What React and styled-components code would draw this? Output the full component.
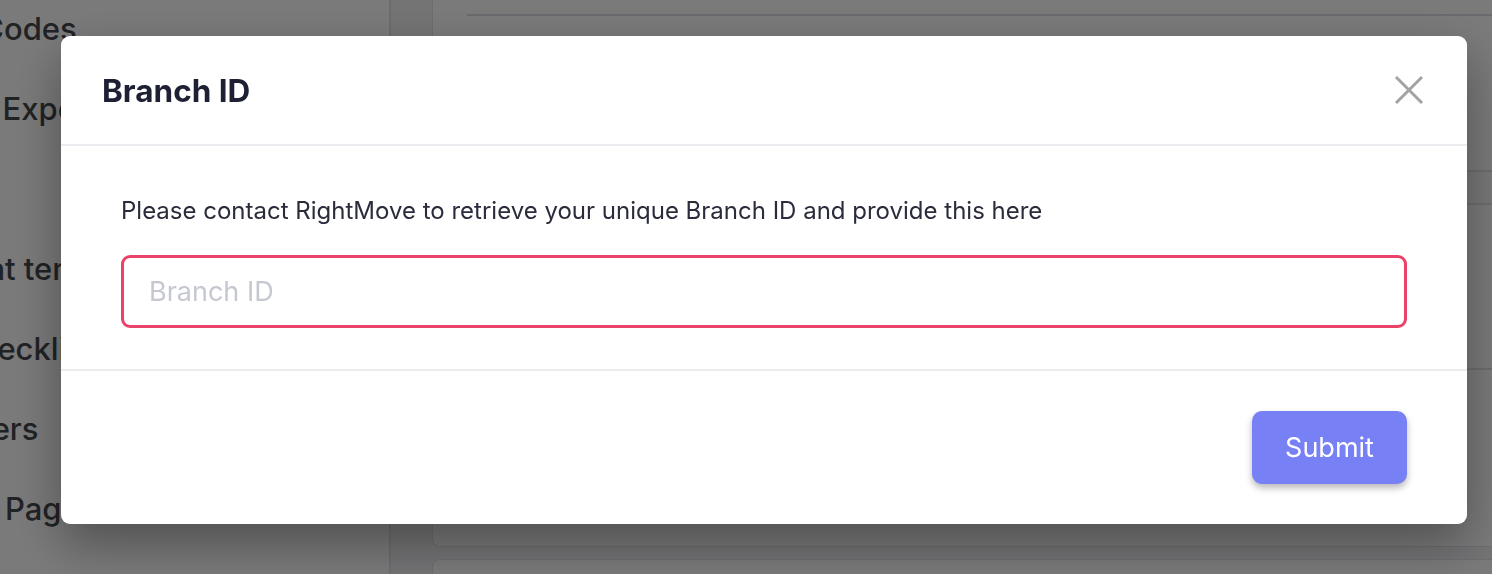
import React from "react";
import styled, { createGlobalStyle } from "styled-components";

const GlobalStyle = createGlobalStyle`
  html, body {
    margin: 0;
    padding: 0;
    height: 100%;
    overflow: hidden;
  }
  body {
    font-family: Inter, "Noto Sans", "Liberation Sans", sans-serif;
    background: #ffffff;
  }
  * { box-sizing: border-box; }
`;

const navItems = [
  { label: "QR Codes", indent: -71 },
  { label: "Data Export", indent: -74 },
  { label: "", indent: 0 },
  { label: "Document templates", indent: -137 },
  { label: "Checklists", indent: -44 },
  { label: "Users", indent: -48 },
  { label: "Landing Pages", indent: -122 },
];

function App() {
  return (
    <>
      <GlobalStyle />
      <StPage>
        <StSidebar>
          {navItems.map((item, i) => (
            <StNavItem key={i} $indent={item.indent}>
              {item.label}
            </StNavItem>
          ))}
        </StSidebar>
        <StMain>
          <StCard>
            <StCardRule />
            <StCardBlock $height={154} />
            <StTableHead />
            <StCardBlock $height={165} $border />
            <StCardBlock $height={176} />
          </StCard>
          <StCard $rounded />
        </StMain>
      </StPage>

      <StOverlay>
        <StModal>
          <StHeader>
            <StTitle>Branch ID</StTitle>
            <StClose type="button" aria-label="Close">
              <svg width="30" height="30" viewBox="0 0 30 30">
                <path
                  d="M2 2 L28 28 M28 2 L2 28"
                  stroke="#a3a3a3"
                  strokeWidth="3"
                  fill="none"
                />
              </svg>
            </StClose>
          </StHeader>

          <StBody>
            <StHint>
              Please contact RightMove to retrieve your unique Branch ID and
              provide this here
            </StHint>
            <StInput type="text" placeholder="Branch ID" />
          </StBody>

          <StFooter>
            <StSubmit type="button">Submit</StSubmit>
          </StFooter>
        </StModal>
      </StOverlay>
    </>
  );
}

export default App;

const StPage = styled.div`
  display: flex;
  height: 574px;
  overflow: hidden;
`;

const StSidebar = styled.nav`
  width: 391px;
  flex-shrink: 0;
  background: #ffffff;
  border-right: 2px solid #e2e3e8;
  overflow: hidden;
  display: flex;
  flex-direction: column;
`;

const StNavItem = styled.div`
  height: 80px;
  flex-shrink: 0;
  display: flex;
  align-items: center;
  margin-left: ${(p) => p.$indent}px;
  white-space: nowrap;
  font-size: 31px;
  font-weight: 500;
  color: #45474d;
  &:first-child {
    margin-top: -12px;
  }
`;

const StMain = styled.main`
  flex: 1;
  background: #f2f2f5;
  padding-left: 41px;
  display: flex;
  flex-direction: column;
  gap: 12px;
  overflow: hidden;
`;

const StCard = styled.section`
  background: #ffffff;
  border: 1px solid #e2e3e8;
  border-right: none;
  border-top: ${(p) => (p.$rounded ? "1px solid #e2e3e8" : "none")};
  border-radius: ${(p) => (p.$rounded ? "8px 0 0 0" : "0 0 0 8px")};
  flex-shrink: 0;
  min-height: ${(p) => (p.$rounded ? "80px" : "auto")};
`;

const StCardRule = styled.div`
  margin-left: 34px;
  margin-top: 14px;
  border-top: 2px solid #dcdde3;
`;

const StCardBlock = styled.div`
  height: ${(p) => p.$height}px;
  border-bottom: ${(p) => (p.$border ? "2px solid #e2e3e8" : "none")};
`;

const StTableHead = styled.div`
  height: 35px;
  background: #fafafb;
  border-top: 2px solid #e2e3e8;
  border-bottom: 2px solid #e2e3e8;
`;

const StOverlay = styled.div`
  position: fixed;
  inset: 0;
  background: rgba(0, 0, 0, 0.52);
  padding: 36px 25px 0 61px;
`;

const StModal = styled.div`
  width: 100%;
  height: 488px;
  background: #ffffff;
  border-radius: 9px;
  box-shadow: 0 20px 50px rgba(0, 0, 0, 0.35);
  display: flex;
  flex-direction: column;
  overflow: hidden;
`;

const StHeader = styled.header`
  height: 110px;
  flex-shrink: 0;
  display: flex;
  align-items: center;
  justify-content: space-between;
  padding: 0 43px 0 41px;
  border-bottom: 2px solid #ebebf0;
`;

const StTitle = styled.h2`
  margin: 0;
  font-size: 31.5px;
  font-weight: 700;
  color: #1e2034;
`;

const StClose = styled.button`
  width: 30px;
  height: 30px;
  padding: 0;
  border: none;
  background: none;
  display: flex;
  align-items: center;
  justify-content: center;
  cursor: pointer;
`;

const StBody = styled.div`
  padding: 50px 60px 41px;
  border-bottom: 2px solid #ebebf0;
  display: flex;
  flex-direction: column;
  gap: 29px;
`;

const StHint = styled.p`
  margin: 0;
  font-size: 24px;
  line-height: 30px;
  color: #2a2c3c;
`;

const StInput = styled.input`
  width: 100%;
  height: 73px;
  border: 3px solid #e9436a;
  border-radius: 9px;
  padding: 0 25px;
  font-family: inherit;
  font-size: 27px;
  color: #2a2c3c;
  outline: none;
  &::placeholder {
    color: #c6c8d1;
  }
`;

const StFooter = styled.div`
  flex: 1;
  display: flex;
  justify-content: flex-end;
  align-items: flex-start;
  padding: 40px 60px;
`;

const StSubmit = styled.button`
  width: 155px;
  height: 73px;
  border: none;
  border-radius: 10px;
  background: #7781f5;
  color: #ffffff;
  font-family: inherit;
  font-size: 27px;
  font-weight: 400;
  box-shadow: 0 4px 7px rgba(0, 0, 0, 0.28);
  cursor: pointer;
`;
